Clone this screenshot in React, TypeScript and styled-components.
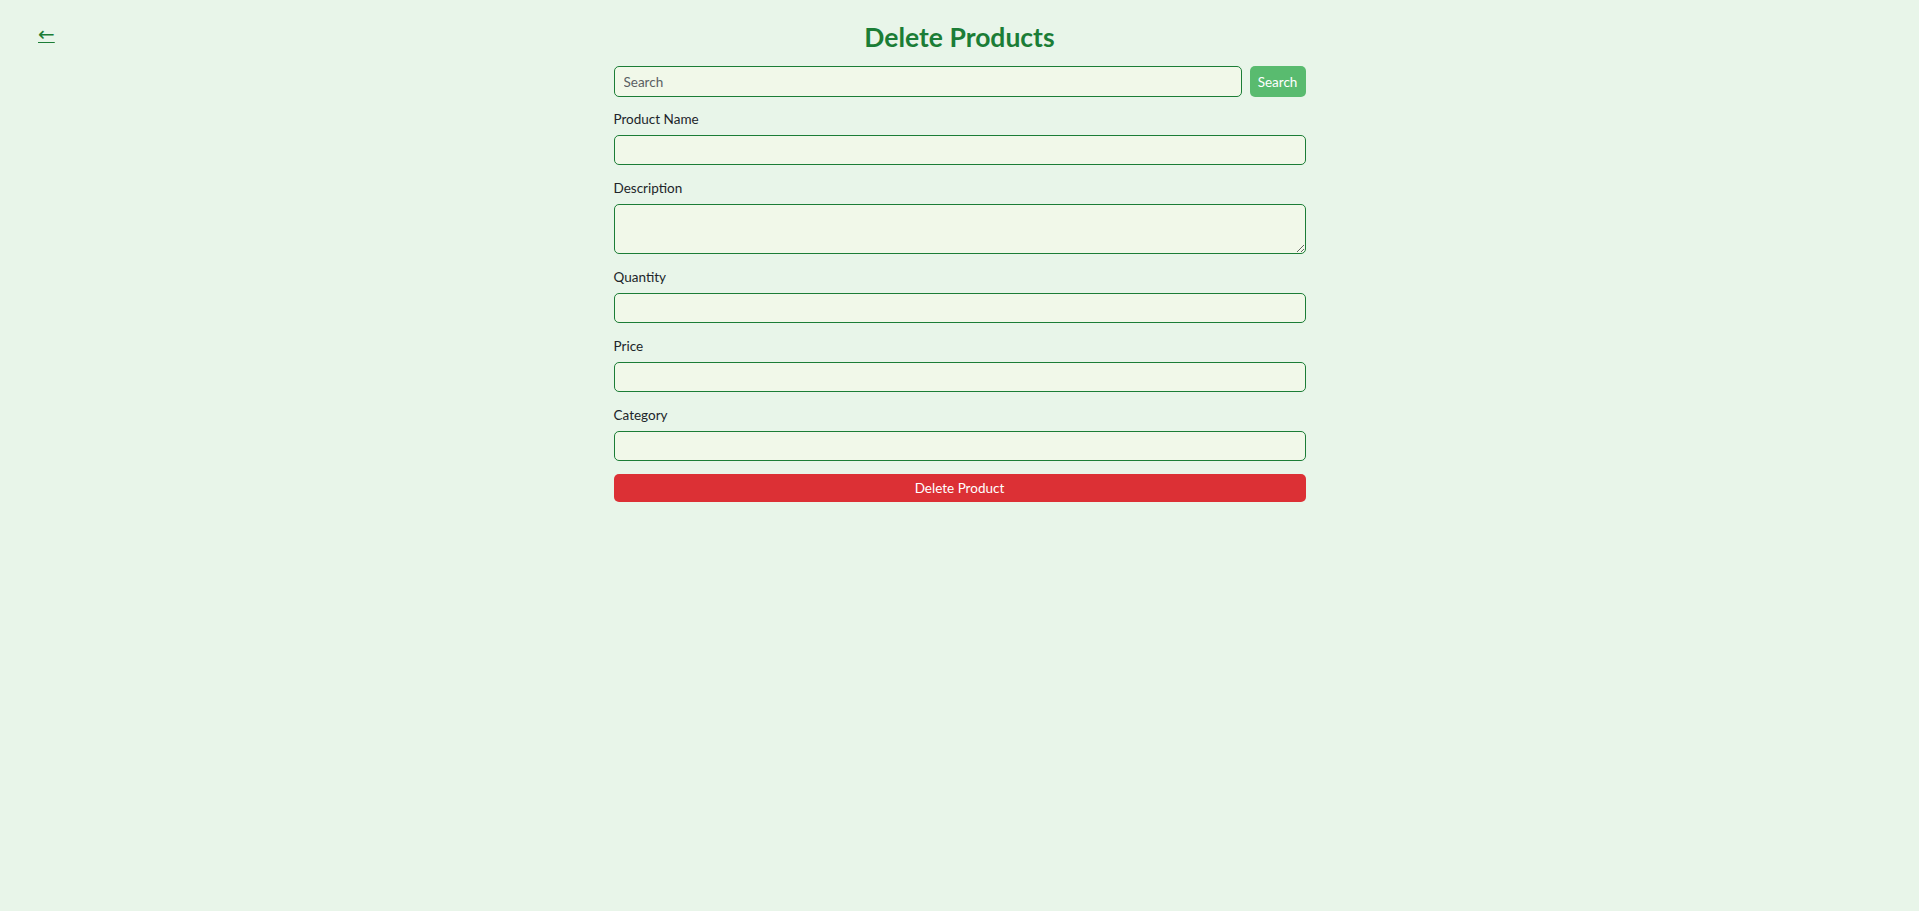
import React from "react";
import styled, { createGlobalStyle } from "styled-components";

const GlobalStyle = createGlobalStyle`
  html, body {
    margin: 0;
    padding: 0;
    background: #e8f5e9;
    font-family: Lato, "Open Sans", sans-serif;
    color: #212529;
  }
  * { box-sizing: border-box; }
`;

const Page = styled.div`
  min-height: 911px;
  background: #e8f5e9;
  padding-top: 22px;
`;

const Header = styled.header`
  display: grid;
  grid-template-columns: 1fr auto 1fr;
  align-items: center;
  padding: 0 38px;
`;

const BackLink = styled.a`
  justify-self: start;
  margin-top: -8px;
  font-family: "DejaVu Sans", sans-serif;
  font-size: 20px;
  line-height: 24px;
  color: #1b7d36;
  text-decoration: underline;
  text-decoration-thickness: 1px;
  cursor: pointer;
`;

const Title = styled.h1`
  margin: 0;
  font-size: 26.5px;
  line-height: 31px;
  font-weight: 700;
  color: #1b7d36;
  text-align: center;
`;

const Form = styled.form`
  width: 692px;
  margin: 13px auto 0;
  display: flex;
  flex-direction: column;
  gap: 13px;
`;

const SearchRow = styled.div`
  display: flex;
  gap: 8px;
  height: 31px;
  margin-bottom: -1px;
`;

const fieldBase = `
  width: 100%;
  border: 1px solid #1b7d36;
  border-radius: 5px;
  background: #f1f8e9;
  font-family: Lato, "Open Sans", sans-serif;
  font-size: 13.5px;
  color: #212529;
  padding: 0 9px;
  outline: none;
`;

const SearchInput = styled.input`
  ${fieldBase}
  flex: 1;
  height: 31px;
  &::placeholder { color: #5a5f63; }
`;

const SearchButton = styled.button`
  width: 56px;
  height: 31px;
  border: none;
  border-radius: 5px;
  background: #59bb6f;
  color: #ffffff;
  font-family: Lato, "Open Sans", sans-serif;
  font-size: 13.5px;
  cursor: pointer;
`;

const Group = styled.div`
  display: flex;
  flex-direction: column;
`;

const Label = styled.label`
  font-size: 13.5px;
  line-height: 20px;
  margin-bottom: 6px;
  color: #212529;
`;

const Input = styled.input`
  ${fieldBase}
  height: 30px;
`;

const TextArea = styled.textarea`
  ${fieldBase}
  height: 50px;
  padding: 4px 9px;
  resize: vertical;
`;

const DeleteButton = styled.button`
  height: 28px;
  border: none;
  border-radius: 5px;
  background: #dc3035;
  color: #ffffff;
  font-family: Lato, "Open Sans", sans-serif;
  font-size: 13.5px;
  cursor: pointer;
`;

const fields: { label: string; multiline?: boolean }[] = [
  { label: "Product Name" },
  { label: "Description", multiline: true },
  { label: "Quantity" },
  { label: "Price" },
  { label: "Category" },
];

export default function App() {
  return (
    <>
      <GlobalStyle />
      <Page>
        <Header>
          <BackLink>←</BackLink>
          <Title>Delete Products</Title>
          <span />
        </Header>
        <Form onSubmit={(e) => e.preventDefault()}>
          <SearchRow>
            <SearchInput placeholder="Search" />
            <SearchButton type="button">Search</SearchButton>
          </SearchRow>
          {fields.map((f) => (
            <Group key={f.label}>
              <Label>{f.label}</Label>
              {f.multiline ? <TextArea /> : <Input />}
            </Group>
          ))}
          <DeleteButton type="submit">Delete Product</DeleteButton>
        </Form>
      </Page>
    </>
  );
}
